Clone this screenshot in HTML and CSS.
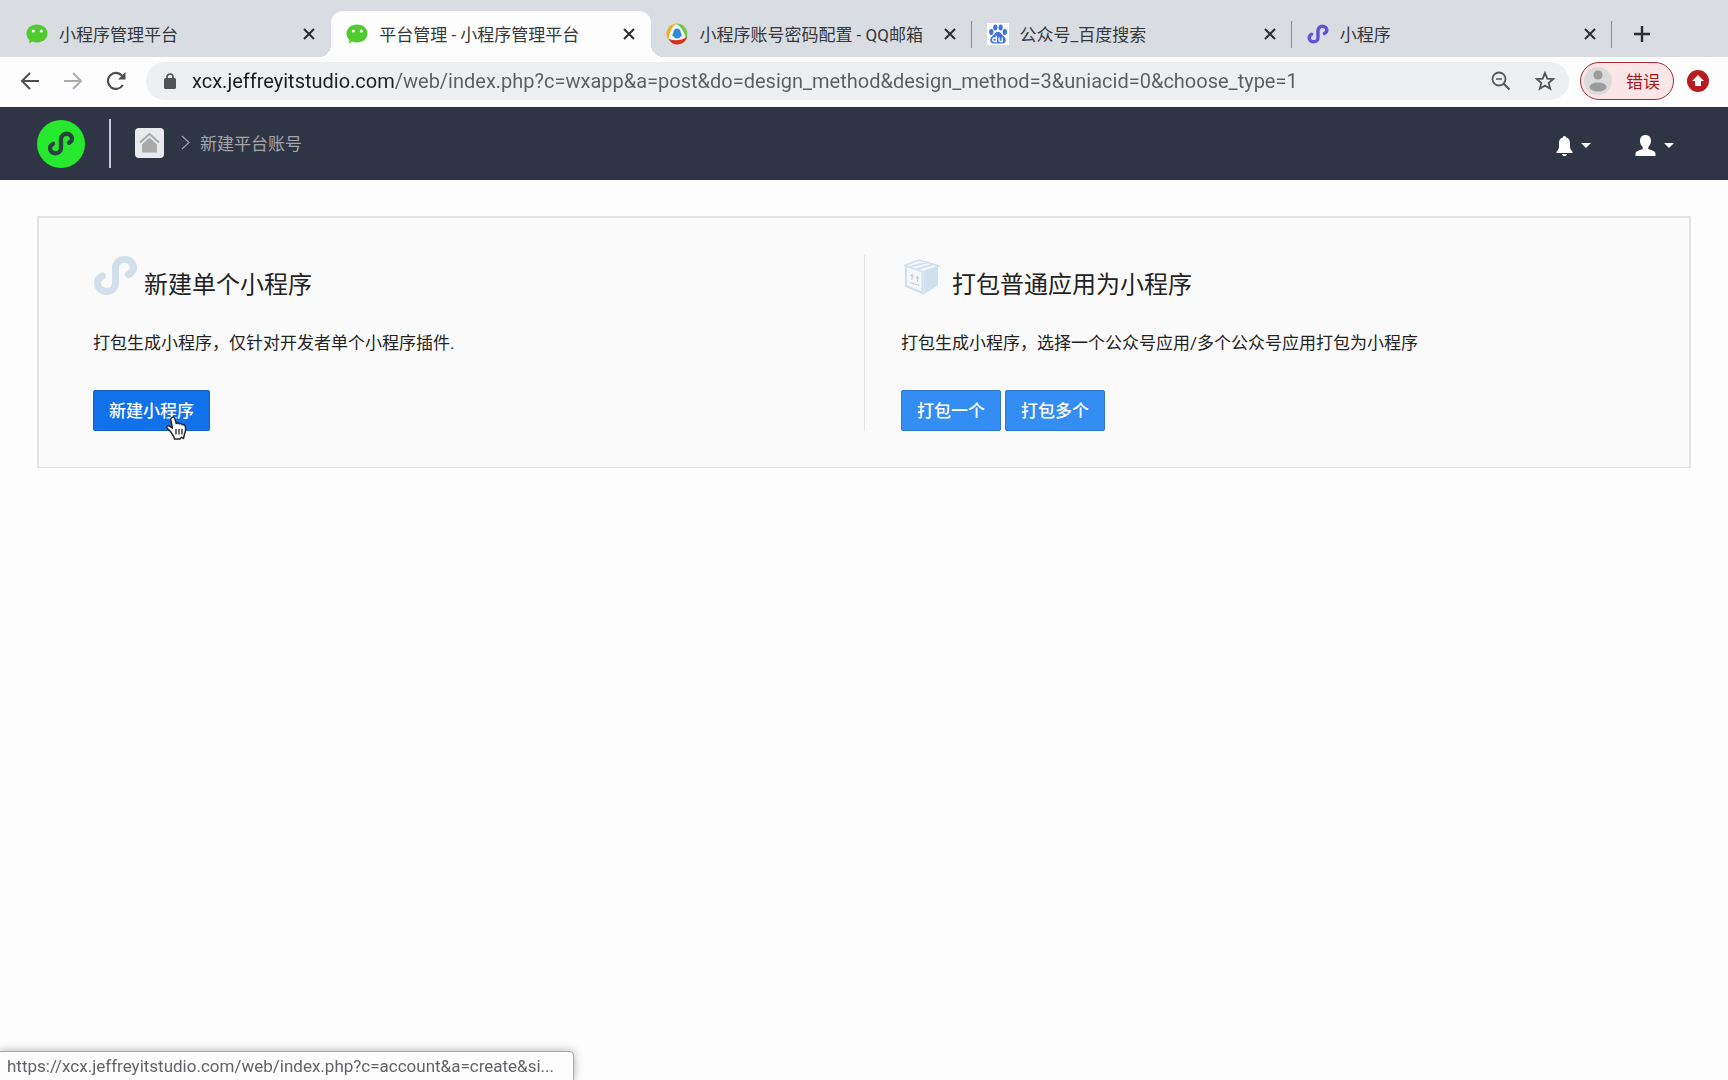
FILE: index.html
```html
<!DOCTYPE html>
<html lang="zh-CN">
<head>
<meta charset="utf-8">
<meta name="viewport" content="width=device-width, initial-scale=1">
<title>平台管理 - 小程序管理平台</title>
<link rel="stylesheet" href="styles.css">
</head>
<body>
<svg class="defs" width="0" height="0" aria-hidden="true">
  <symbol id="mini" viewBox="0 0 45 41"><path d="M9.500 21C6.500 22.500 4.500 25 4.500 28C4.500 33 8.800 36.500 13.700 36.500C18.800 36.500 22.500 33 22.500 27.500V13.500C22.500 8 26.500 4.500 31.500 4.500C36.500 4.500 40.500 8 40.500 12.800C40.500 15.800 38.500 18 35.500 19.500" fill="none" stroke="currentColor" stroke-width="7" stroke-linecap="round"/></symbol>
  <symbol id="wechat" viewBox="0 0 22 20"><path d="M11 .5C17 .5 21.500 4.400 21.500 9.500S17 18.500 11 18.500C9.300 18.500 7.700 18.200 6.300 17.600L3 19.500L3.500 16C1.600 14.400 .5 12 .5 9.500C.5 4.400 5 .5 11 .5Z" fill="#4fcb30"/><circle cx="7.300" cy="7" r="1.600" fill="#fff"/><circle cx="15.300" cy="7" r="1.600" fill="#fff"/></symbol>
  <symbol id="close" viewBox="0 0 12 12"><path d="M1 1L11 11M11 1L1 11" stroke="#2b2d31" stroke-width="2"/></symbol>
</svg>

<div class="tabstrip" role="tablist">
  <div class="tab">
    <svg class="favicon" viewBox="0 0 22 20"><use href="#wechat"/></svg>
    <button class="tab-title" role="tab">小程序管理平台</button>
    <button class="icon-button tab-close" aria-label="关闭"><svg width="12" height="12"><use href="#close"/></svg></button>
  </div>
  <div class="tab tab-active">
    <svg class="favicon" viewBox="0 0 22 20"><use href="#wechat"/></svg>
    <button class="tab-title" role="tab" aria-selected="true">平台管理 - 小程序管理平台</button>
    <button class="icon-button tab-close" aria-label="关闭"><svg width="12" height="12"><use href="#close"/></svg></button>
  </div>
  <div class="tab tab-divided">
    <svg class="favicon" viewBox="0 0 22 22"><circle cx="11" cy="11" r="9" fill="#f7f7f4"/><path d="M10 .5C3.500 1 .2 6 .5 11.500C.7 14 1.500 15.500 2.500 17C3.500 10.500 5 5 10 .5Z" fill="#e9b02c"/><path d="M10 .5C17 .3 21.800 5 21.300 12C21 13.500 20.500 14.500 20 15.500C18.500 10 16 4.500 10 .5Z" fill="#78c64a"/><path d="M2.500 16C5 20.500 9 22 13 21.300C17.500 20.500 20.500 17.500 21.200 13.500C16 17.500 9.500 18.500 2.500 16Z" fill="#d4301c"/><path d="M11 5.500C13.500 5.500 14.700 7.300 14.700 9.500C15.500 11 16 12.500 15.700 13.500L14.700 13C14.500 14.500 13.500 15.500 11.300 15.500S7.800 14.500 7.500 13L6.500 13.500C6.200 12.500 6.600 11 7.400 9.500C7.400 7.300 8.500 5.500 11 5.500Z" fill="#2c8ed8"/></svg>
    <button class="tab-title" role="tab">小程序账号密码配置 - QQ邮箱</button>
    <button class="icon-button tab-close" aria-label="关闭"><svg width="12" height="12"><use href="#close"/></svg></button>
  </div>
  <div class="tab tab-divided">
    <svg class="favicon" viewBox="0 0 22 22"><path d="M0 0H22V22H0Z" fill="#fff"/><g fill="#3d74e0"><ellipse cx="4.300" cy="9" rx="2.200" ry="2.900"/><ellipse cx="8.300" cy="4.500" rx="2.100" ry="2.900"/><ellipse cx="13.600" cy="4.500" rx="2.100" ry="2.900"/><ellipse cx="17.800" cy="9" rx="2.200" ry="2.900"/><path d="M11 8.800C13 8.800 14 10.500 15.300 12C17 13.500 18.800 14.800 18.800 17.200C18.800 19.500 17 20.600 15 20.600H7C5 20.600 3.200 19.500 3.200 17.200C3.200 14.800 5 13.500 6.700 12C8 10.500 9 8.800 11 8.800Z"/></g><path d="M9.300 12.800V18.500H7.500A1.700 1.700 0 0 1 7.500 15H9.300M12 14.500V17.200Q12 18.500 13.500 18.500H15.300V14.500" fill="none" stroke="#fff" stroke-width="1.300"/></svg>
    <button class="tab-title" role="tab">公众号_百度搜索</button>
    <button class="icon-button tab-close" aria-label="关闭"><svg width="12" height="12"><use href="#close"/></svg></button>
  </div>
  <div class="tab tab-divided">
    <svg class="favicon favicon-mini" viewBox="0 0 45 41"><use href="#mini"/></svg>
    <button class="tab-title" role="tab">小程序</button>
    <button class="icon-button tab-close" aria-label="关闭"><svg width="12" height="12"><use href="#close"/></svg></button>
  </div>
  <button class="icon-button new-tab" aria-label="新标签页"><svg width="16" height="16" viewBox="0 0 16 16"><path d="M8 0V16M0 8H16" stroke="#2b2d31" stroke-width="2.400"/></svg></button>
</div>

<div class="toolbar">
  <div class="history">
    <button class="icon-button" aria-label="后退"><svg width="20" height="20" viewBox="0 0 20 20"><path d="M19 10H2.500M10 2L2 10L10 18" fill="none" stroke="#4c4e52" stroke-width="2"/></svg></button>
    <button class="icon-button" aria-label="前进"><svg width="20" height="20" viewBox="0 0 20 20"><path d="M1 10H17.500M10 2L18 10L10 18" fill="none" stroke="#aaacb0" stroke-width="2"/></svg></button>
    <button class="icon-button" aria-label="重新加载"><svg width="20" height="20" viewBox="0 0 20 20"><path d="M16.800 14A8 8 0 1 1 16 4.700" fill="none" stroke="#4c4e52" stroke-width="2.200"/><path d="M19.500 1V8.500H12Z" fill="#4c4e52"/></svg></button>
  </div>
  <form class="omnibox">
    <svg width="12" height="16" viewBox="0 0 12 16"><rect y="5" width="12" height="11" rx="1.500" fill="#505256"/><path d="M3 6V4A3 3 0 0 1 9 4V6" fill="none" stroke="#505256" stroke-width="1.700"/></svg>
    <input class="url" type="text" aria-label="地址" value="xcx.jeffreyitstudio.com/web/index.php?c=wxapp&amp;a=post&amp;do=design_method&amp;design_method=3&amp;uniacid=0&amp;choose_type=1">
    <button class="icon-button" type="button" aria-label="缩放"><svg width="20" height="20" viewBox="0 0 20 20"><circle cx="8" cy="8" r="6.500" fill="none" stroke="#56585c" stroke-width="1.800"/><path d="M5 8H11" stroke="#56585c" stroke-width="1.500"/><path d="M12.500 12.500L18.500 18.500" stroke="#56585c" stroke-width="2.200"/></svg></button>
    <button class="icon-button" type="button" aria-label="收藏"><svg width="20" height="20" viewBox="0 0 20 20"><path d="M10 2L12.300 7.600L18.300 8L13.700 11.900L15.200 17.800L10 14.600L4.800 17.800L6.300 11.900L1.700 8L7.700 7.600Z" fill="none" stroke="#505256" stroke-width="1.800"/></svg></button>
  </form>
  <button class="profile"><svg width="28" height="28" viewBox="0 0 28 28"><circle cx="14" cy="14" r="14" fill="#dadada"/><circle cx="14" cy="8" r="4.600" fill="#9b9b9b"/><ellipse cx="14" cy="20" rx="8.500" ry="4.600" fill="#9b9b9b"/></svg><span class="profile-label">错误</span></button>
  <button class="icon-button" aria-label="更新"><svg width="22" height="22" viewBox="0 0 22 22"><circle cx="11" cy="11" r="11" fill="#b81c22"/><path d="M11 5L17 11H14V16H8V11H5Z" fill="#fff"/></svg></button>
</div>

<header class="header">
  <a class="logo" href="#" aria-label="小程序"><svg width="28" height="25" viewBox="0 0 45 41"><use href="#mini"/></svg></a>
  <nav class="crumbs">
    <a class="home" href="#" aria-label="首页"><svg width="21" height="20" viewBox="0 0 21 20"><path d="M1 9.500L10.500 1L20 9.500" fill="none" stroke="#a9a9a9" stroke-width="2"/><path d="M10.500 4.500L18 11.500V19.500H3V11.500Z" fill="#a9a9a9"/></svg></a>
    <svg width="9" height="15" viewBox="0 0 9 15"><path d="M1 1L8 7.500L1 14" fill="none" stroke="#9da1ab" stroke-width="1.200"/></svg>
    <span class="crumb">新建平台账号</span>
  </nav>
  <div class="account">
    <button class="icon-button menu" aria-label="通知"><svg width="17" height="20" viewBox="0 0 17 20"><path d="M8.500 0C9.400 0 10 .6 10.100 1.500C13 2.200 14 4.500 14 7V11C14 13.200 15.500 14.500 16.500 15.700V17H.5V15.700C1.500 14.500 3 13.200 3 11V7C3 4.500 4 2.200 6.900 1.500C7 .6 7.600 0 8.500 0ZM5.700 18H11.300C10.800 19.400 9.800 20 8.500 20S6.200 19.400 5.700 18Z" fill="#fff"/></svg><span class="caret"></span></button>
    <button class="icon-button menu" aria-label="用户"><svg width="21" height="21" viewBox="0 0 21 21"><path d="M10.500 0C14 0 16 2.300 16 5.800C16 8.700 14.700 11 13.300 12V14C16 15.200 20.500 16 20.500 18.500V21H.5V18.500C.5 16 5 15.200 7.700 14V12C6.300 11 5 8.700 5 5.800C5 2.300 7 0 10.500 0Z" fill="#fff"/></svg><span class="caret"></span></button>
  </div>
</header>

<main class="main">
  <div class="panel">
    <section class="option">
      <h3 class="option-title"><svg width="45" height="41" viewBox="0 0 45 41"><use href="#mini"/></svg>新建单个小程序</h3>
      <p class="option-text">打包生成小程序，仅针对开发者单个小程序插件.</p>
      <div class="actions">
        <button class="button button-hover">新建小程序</button>
        <svg class="pointer" width="22" height="26" viewBox="0 0 22 26"><path d="M6 2.500C7.500 1.500 8.700 2.500 9 4L10.200 8.500C11 7.600 12.700 7.800 13.200 9C14.200 8.200 15.700 8.600 16.200 9.900C17.500 9.200 19 10 19.300 11.500C20 15 19.600 16.600 18.500 19L17.500 23.500L15.500 22.300L14 24H8.500L8 22L4.500 16.500L1 13C.2 11.500 1.700 10.300 3.300 11L6.500 13.300L4.800 5C4.600 3.900 5 3 6 2.500Z" fill="#fff" stroke="#222" stroke-width="1.400" stroke-linejoin="round"/><path d="M10 14V19.500M13 14V19.500M16 14V19.500" stroke="#222" stroke-width="1.300"/></svg>
      </div>
    </section>
    <section class="option">
      <h3 class="option-title"><svg width="45" height="41" viewBox="-1 -1 45 41"><path d="M3 9L20 16V38.500L4.500 30.500V11L3 10.300Z" fill="#f4f8fb"/><path d="M21.500 16.500L36 10.500V29.500L21.500 38.500Z" fill="#cfe0ef"/><path d="M2.500 9.500L17 4L37 10L21 16ZM8.500 10.700L25 6.300M15 13.200L31 8.300" fill="#f4f8fb" stroke="#cfdfec" stroke-width="1.800" stroke-linejoin="round"/><path d="M4 11.500V30L20.500 37V17" fill="none" stroke="#cfdfec" stroke-width="2"/><path d="M10 24V18.500M15.500 26V20.500M8.500 20L10 18.500L11.500 21M14 22L15.500 20.500L17 23M8.500 26.500L17 29.500" fill="none" stroke="#c3d1de" stroke-width="1.100"/></svg>打包普通应用为小程序</h3>
      <p class="option-text">打包生成小程序，选择一个公众号应用/多个公众号应用打包为小程序</p>
      <div class="actions">
        <button class="button">打包一个</button>
        <button class="button">打包多个</button>
      </div>
    </section>
  </div>
</main>

<div class="status">https://xcx.jeffreyitstudio.com/web/index.php?c=account&amp;a=create&amp;si...</div>
</body>
</html>
```
FILE: styles.css
```css
* {
  box-sizing: border-box;
}

body {
  margin: 0;
  min-height: 100vh;
  background: #fdfdfd;
  color: #222;
  font-family: Roboto, "Noto Sans CJK SC", sans-serif;
  font-size: 17px;
}

button,
input {
  font: inherit;
}

svg {
  display: block;
  flex: none;
}

.defs {
  position: absolute;
}

.icon-button {
  display: flex;
  align-items: center;
  justify-content: center;
  padding: 0;
  border: 0;
  background: none;
}

/* Tab strip */
.tabstrip {
  display: flex;
  height: 57px;
  padding: 11px 56px 0 11px;
  background: #d9dde2;
}

.tab {
  position: relative;
  display: flex;
  flex: 1;
  align-items: center;
  min-width: 0;
  padding: 0 16px 0 15px;
  gap: 11px;
  height: 46px;
}

.tab-active {
  background: #fdfdfd;
  border-radius: 12px 12px 0 0;
}

.tab-active::before,
.tab-active::after {
  content: "";
  position: absolute;
  bottom: 0;
  width: 12px;
  height: 12px;
}

.tab-active::before {
  left: -12px;
  background: radial-gradient(circle at 0 0, transparent 12px, #fdfdfd 12px);
}

.tab-active::after {
  right: -12px;
  background: radial-gradient(circle at 100% 0, transparent 12px, #fdfdfd 12px);
}

.tab-divided::after {
  content: "";
  position: absolute;
  top: 10px;
  right: 0;
  width: 1px;
  height: 27px;
  background: #85888d;
}

.favicon {
  width: 22px;
  height: 22px;
}

.favicon-mini {
  color: #6352d2;
}

.tab-title {
  flex: 1;
  min-width: 0;
  padding: 0 0 2px;
  overflow: hidden;
  border: 0;
  background: none;
  color: #35373b;
  text-align: left;
  white-space: nowrap;
}

.tab-close {
  width: 12px;
  height: 24px;
}

.new-tab {
  width: 60px;
  height: 46px;
}

/* Toolbar */
.toolbar {
  display: flex;
  align-items: center;
  height: 50px;
  padding: 0 19px 2px 20px;
  background: #fdfdfd;
}

.history {
  display: flex;
  gap: 23px;
  margin-right: 20px;
}

.omnibox {
  display: flex;
  flex: 1;
  align-items: center;
  min-width: 0;
  height: 38px;
  margin-right: 11px;
  padding: 0 14px 0 18px;
  border-radius: 19px;
  background: #eeeff1;
  gap: 24px;
}

.url {
  flex: 1;
  min-width: 0;
  height: 30px;
  margin-left: -8px;
  padding: 0;
  border: 0;
  outline: 0;
  color: #5b5d61;
  font-size: 20px;
  background: linear-gradient(90deg, #1d1e20 203px, #5b5d61 203px);
  background-clip: text;
  -webkit-background-clip: text;
  -webkit-text-fill-color: transparent;
}

.profile {
  display: flex;
  align-items: center;
  height: 38px;
  margin-right: 13px;
  padding: 0 13px 0 3px;
  border: 1px solid #a52a33;
  border-radius: 19px;
  background: #fae6e7;
  color: #a31922;
  gap: 14px;
}

.profile-label {
  padding-bottom: 2px;
}

/* Site header */
.header {
  display: flex;
  align-items: center;
  height: 73px;
  padding: 0 54px 0 37px;
  background: #303546;
}

.logo {
  display: flex;
  align-items: center;
  justify-content: center;
  width: 48px;
  height: 48px;
  border-radius: 50%;
  background: #26e82c;
  color: #28413f;
}

.crumbs {
  display: flex;
  align-items: center;
  height: 49px;
  margin-left: 24px;
  padding: 0 0 2px 24px;
  border-left: 2px solid #c6c9d2;
}

.home {
  display: flex;
  align-items: center;
  justify-content: center;
  width: 29px;
  height: 30px;
  margin-right: 17px;
  border-radius: 4px;
  background: #e9eaec;
}

.crumb {
  margin-left: 10px;
  color: #a3a5ab;
}

.account {
  display: flex;
  margin-left: auto;
  padding-top: 4px;
  gap: 44px;
}

.menu {
  gap: 8px;
}

.caret {
  border: 5px solid transparent;
  border-top-color: #fff;
  border-bottom: 0;
}

/* Creation options */
.main {
  padding: 36px 37px;
}

.panel {
  display: grid;
  grid-template-columns: 1fr 1fr;
  padding: 37px 0 36px;
  border: 2px solid #e3e3e3;
  border-bottom-width: 1px;
  background: #fafafa;
}

.option {
  padding: 0 36px;
}

.option:first-child {
  padding-left: 54px;
}

.option + .option {
  border-left: 1px solid #e3e3e3;
}

.option-title {
  display: flex;
  height: 41px;
  margin: 0;
  font-size: 24px;
  font-weight: 400;
  line-height: 60px;
  gap: 6px;
}

.option-title svg {
  color: #d0dfeb;
}

.option-text {
  margin: 33px 0;
  line-height: 28px;
}

.actions {
  position: relative;
  display: flex;
  gap: 4px;
}

.button {
  height: 41px;
  padding: 0 15px 3px;
  border: 1px solid #2b79d0;
  border-radius: 2px;
  background: #338df3;
  color: #fff;
  font-weight: 500;
}

.button-hover {
  border-color: #1561bd;
  background: #1071eb;
}

.pointer {
  position: absolute;
  top: 25px;
  left: 73px;
}

/* Link preview */
.status {
  position: fixed;
  bottom: 0;
  left: 0;
  width: 574px;
  height: 29px;
  padding-left: 7px;
  overflow: hidden;
  border: 1px solid #a9a9a9;
  border-width: 1px 1px 0 0;
  border-radius: 0 5px 0 0;
  background: #fdfdfd;
  box-shadow: 0 0 10px rgba(0, 0, 0, .3);
  color: #616366;
  line-height: 28px;
  white-space: nowrap;
}
```
